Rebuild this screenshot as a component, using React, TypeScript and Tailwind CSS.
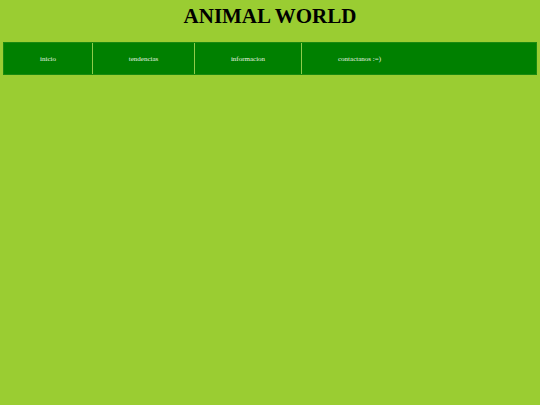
import React from "react";

export default function App() {
  return (
    <div className="min-h-[405px] w-full bg-[#9acd32] pt-[4px] font-['Liberation_Serif',serif]">
      <h1 className="m-0 text-center text-[21px] font-bold leading-[24px] text-black">ANIMAL WORLD</h1>
      <nav className="mx-[3px] mt-[14px] flex h-[33px] border border-[#1a8a10] bg-[#008000] text-[7px] text-[#e6f2e0]">
        <div className="flex w-[88px] box-content items-center justify-center border-r border-[#8fcc4a] pt-[1px]">inicio</div>
        <div className="flex w-[101px] box-content items-center justify-center border-r border-[#8fcc4a] pt-[1px]">tendencias</div>
        <div className="flex w-[106px] box-content items-center justify-center border-r border-[#8fcc4a] pt-[1px]">informacion</div>
        <div className="flex items-center pl-[36px] pt-[1px]">contactanos :=)</div>
      </nav>
    </div>
  );
}
